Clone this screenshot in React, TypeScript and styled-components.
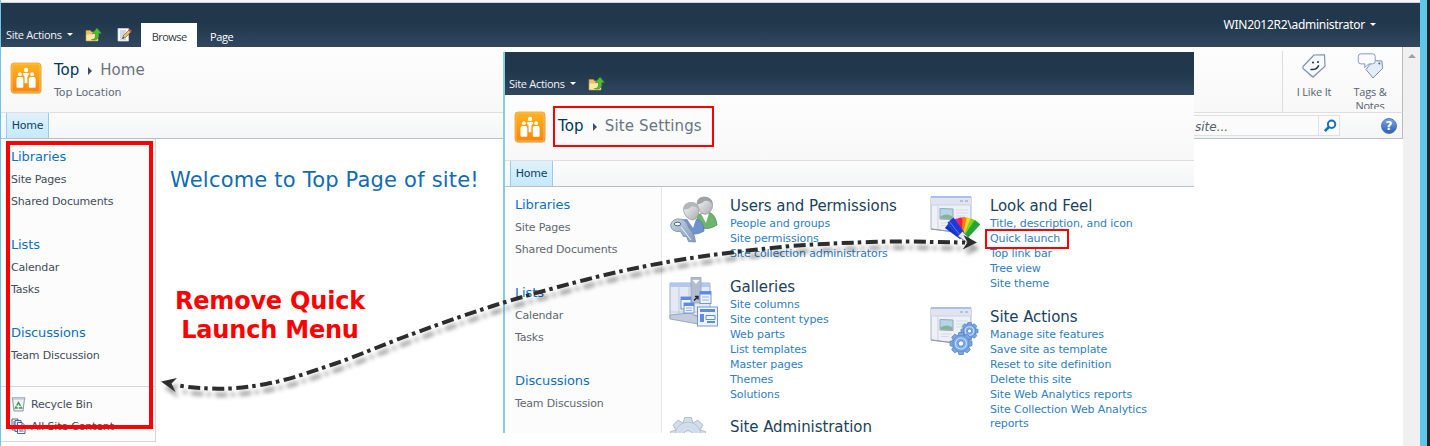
import React from "react";
import styled, { createGlobalStyle } from "styled-components";

const GlobalStyle = createGlobalStyle`
  * { box-sizing: border-box; }
  body {
    margin: 0;
    background: #fff;
    font-family: Verdana, "DejaVu Sans", sans-serif;
    font-size: 11px;
    overflow: hidden;
  }
`;

const uiFont = `"Open Sans", "Noto Sans", sans-serif`;

const Page = styled.div`
  position: relative;
  display: flex;
  width: 1430px;
  height: 446px;
  overflow: hidden;
  background: #fff;
`;

const Desktop = styled.div`
  width: 10px;
  flex: none;
  background: #5ec8ea;
  border-right: 3px solid #24262a;
`;

const Window = styled.div`
  flex: 1;
  display: flex;
  flex-direction: column;
  min-width: 0;
  border-left: 1px solid #6fc6e6;
`;

const WindowEdge = styled.div`
  height: 3px;
  flex: none;
  background: #f6f6f6;
  border-bottom: 1px solid #cfd3d8;
`;

const Ribbon = styled.div<{ $h: number }>`
  display: flex;
  align-items: flex-end;
  flex: none;
  height: ${(p) => p.$h}px;
  background: linear-gradient(#21374c 0%, #21374c 45%, #31475e 100%);
  color: #fff;
  font-family: ${uiFont};
`;

const SiteActions = styled.div<{ $bottom: number; $left?: number }>`
  display: flex;
  align-items: center;
  height: 18px;
  margin: 0 12px ${(p) => p.$bottom}px ${(p) => p.$left ?? 5}px;
  gap: 5px;
  font-size: 11px;
  letter-spacing: -0.3px;
  white-space: nowrap;
  color: #f1f3f5;
`;

const Caret = styled.i`
  border: 3px solid transparent;
  border-top-color: #fff;
  border-bottom: 0;
`;

const RibbonIcon = styled.span<{ $bottom: number; $right?: number }>`
  display: flex;
  margin: 0 ${(p) => p.$right ?? 0}px ${(p) => p.$bottom}px 0;
`;

const RibbonTab = styled.div<{ $active?: boolean }>`
  height: 24px;
  padding: ${(p) => (p.$active ? "0 10.500px 0 11px" : "0 13px")};
  line-height: 28px;
  font-size: 11px;
  letter-spacing: ${(p) => (p.$active ? -0.55 : -0.4)}px;
  background: ${(p) => (p.$active ? "#fff" : "transparent")};
  color: ${(p) => (p.$active ? "#33393f" : "#fff")};
`;

const Account = styled.div`
  display: flex;
  align-items: center;
  gap: 5px;
  height: 20px;
  margin: 0 44px 13px auto;
  font-family: "Noto Sans", sans-serif;
  font-size: 12px;
  letter-spacing: -0.27px;
`;

const Below = styled.div`
  display: flex;
  flex: 1;
  min-height: 0;
`;

const Site = styled.div`
  flex: 1;
  display: flex;
  flex-direction: column;
  min-width: 0;
`;

const ScrollBar = styled.div`
  width: 17px;
  flex: none;
  display: flex;
  justify-content: center;
  padding-top: 7px;
  background: #f0f0f0;
`;

const ScrollUp = styled.i`
  height: 4px;
  border: 4px solid transparent;
  border-bottom-color: #a0a0a0;
  border-top: 0;
`;

const Header = styled.div<{ $edge?: boolean }>`
  display: flex;
  flex: none;
  height: 66px;
  background: linear-gradient(#fdfdfd, #f8f8f9);
  border-bottom: 1px solid #dedede;
  border-right: ${(p) => (p.$edge ? "1px solid #b8babd" : "0")};
`;

const Logo = styled.div<{ $top: number }>`
  margin: ${(p) => p.$top}px 12px 0 9px;
  height: 32px;
`;

const Titles = styled.div<{ $top: number }>`
  display: flex;
  flex-direction: column;
  padding-top: ${(p) => p.$top}px;
`;

const Crumbs = styled.div<{ $ls?: number }>`
  display: flex;
  align-items: center;
  height: 20px;
  font-size: 15px;
  letter-spacing: ${(p) => p.$ls ?? 0}px;
  color: #003759;
  white-space: nowrap;
`;

const CrumbArrow = styled.i`
  margin: 2px 8px 0 9px;
  border: 4px solid transparent;
  border-left-color: #3b4f65;
  border-right: 0;
`;

const CrumbCurrent = styled.span`
  color: #6a7482;
`;

const SubTitle = styled.div`
  margin-top: 6px;
  line-height: 14px;
  letter-spacing: -0.1px;
  color: #5f6b7a;
`;

const Social = styled.div`
  display: flex;
  margin: 4px 0 0 auto;
  width: 120px;
  height: 61px;
  border-left: 1px solid #dcdcdc;
`;

const SocialItem = styled.div<{ $left: number; $w: number }>`
  display: flex;
  flex-direction: column;
  align-items: center;
  width: ${(p) => p.$w}px;
  height: 58px;
  margin-left: ${(p) => p.$left}px;
  overflow: hidden;
  font-family: ${uiFont};
  font-size: 11px;
  line-height: 14px;
  letter-spacing: -0.2px;
  text-align: center;
  color: #56616e;
  svg { flex: none; margin: 2px 0 6px; }
`;

const TopNav = styled.div<{ $edge?: boolean }>`
  display: flex;
  align-items: stretch;
  flex: none;
  height: 26px;
  background: linear-gradient(#fcfcfc, #f4f5f6);
  border-bottom: 1px solid #bcbfc2;
  border-right: ${(p) => (p.$edge ? "1px solid #b8babd" : "0")};
`;

const NavTab = styled.div`
  width: 43px;
  margin-left: 5px;
  border: 1px solid #91cdf2;
  border-width: 0 1px;
  background: linear-gradient(#dff2fd, #c5e9fc);
  color: #0f3f63;
  line-height: 25px;
  text-align: center;
  letter-spacing: -0.2px;
`;

const SearchBox = styled.div`
  display: flex;
  width: 170px;
  height: 21px;
  margin: 2px 41px 0 auto;
  border: 1px solid #e0e0e0;
  background: #fbfbfb;
`;

const SearchText = styled.span`
  flex: 1;
  padding-left: 24px;
  line-height: 23px;
  font-style: italic;
  font-size: 12px;
  color: #555f6b;
`;

const SearchButton = styled.span`
  display: flex;
  align-items: center;
  justify-content: center;
  width: 21px;
  padding-left: 1px;
  border-left: 1px solid #e0e0e0;
`;

const Help = styled.span`
  display: flex;
  align-items: center;
  margin-right: 5px;
`;

const Body = styled.div`
  display: flex;
  align-items: flex-start;
  flex: 1;
  min-height: 0;
`;

const Side = styled.div<{ $w: number; $h: number; $line: string; $faded?: boolean }>`
  display: flex;
  flex-direction: column;
  flex: none;
  width: ${(p) => p.$w}px;
  height: ${(p) => p.$h}px;
  padding-top: 6px;
  background: #fcfcfc;
  border: 0 solid ${(p) => p.$line};
  border-right-width: 1px;
  border-bottom-width: ${(p) => (p.$faded ? 0 : 1)}px;
  color: ${(p) => (p.$faded ? "#5f6770" : "#424d59")};
  letter-spacing: -0.17px;
`;

const SideGroup = styled.div`
  display: flex;
  flex-direction: column;
  margin: 0 0 21px 10px;
  white-space: nowrap;
`;

const SideHead = styled.div`
  height: 23px;
  line-height: 23px;
  font-size: 13px;
  letter-spacing: -0.12px;
  color: #0d72bc;
`;

const SideItem = styled.div`
  display: flex;
  align-items: center;
  gap: 5px;
  height: 22px;
`;

const SideFooter = styled.div`
  margin-top: -1px;
  border-top: 1px solid #d5d7da;
  padding: 6px 0 0 10px;
`;

const Welcome = styled.h1`
  margin: 29px 0 0 14px;
  font-weight: 400;
  font-size: 21px;
  letter-spacing: 0.2px;
  line-height: 25px;
  color: #0f6cb4;
  white-space: nowrap;
`;

const Inset = styled.section`
  position: absolute;
  left: 503px;
  top: 52px;
  width: 691px;
  height: 381px;
  display: flex;
  flex-direction: column;
  overflow: hidden;
  background: #fff;
  border-left: 2px solid #86cde6;
`;

const Column = styled.div<{ $left: number; $w: number }>`
  display: flex;
  flex-direction: column;
  width: ${(p) => p.$w}px;
  margin-left: ${(p) => p.$left}px;
  padding-top: 9px;
`;

const SettingsGroup = styled.div<{ $n: number }>`
  display: flex;
  height: ${(p) => 35.3 + p.$n * 15.08}px;
  flex: none;
  & > svg { flex: none; margin-top: 0; }
`;

const SettingsText = styled.div<{ $gap: number }>`
  margin-left: ${(p) => p.$gap}px;
  white-space: nowrap;
`;

const SettingsHead = styled.div`
  height: 20px;
  line-height: 20px;
  font-size: 15px;
  letter-spacing: -0.08px;
  color: #1a4260;
`;

const SettingsLink = styled.div`
  height: 15.08px;
  line-height: 15.08px;
  letter-spacing: -0.11px;
  color: #2f80c3;
`;

const WrappedLine = styled.div`
  line-height: 14px;
`;

const Callout = styled.div<{ $x: number; $y: number; $w: number; $h: number; $b: number }>`
  position: absolute;
  left: ${(p) => p.$x}px;
  top: ${(p) => p.$y}px;
  width: ${(p) => p.$w}px;
  height: ${(p) => p.$h}px;
  border: ${(p) => p.$b}px solid #fe0000;
`;

const Note = styled.div`
  position: absolute;
  left: 170px;
  top: 287px;
  width: 200px;
  text-align: center;
  font-size: 24px;
  font-weight: 700;
  line-height: 29px;
  letter-spacing: -0.2px;
  color: #fe0000;
  white-space: nowrap;
`;

const Connector = styled.svg`
  position: absolute;
  left: 0;
  top: 0;
  filter: drop-shadow(3px 6px 2px rgba(0, 0, 0, 0.4));
`;

const FolderUp = () => (
  <svg width="17" height="15" viewBox="0 0 17 15">
    <path d="M1 3.500h4.500l1 1.500H13v9H1z" fill="#e8c468" stroke="#b98d35" strokeWidth=".7" />
    <path d="M1.400 7.500h7l1-1H13V13.600H1.400z" fill="#fbe9a9" />
    <path d="M6.500 12.500c3 .3 4.200-1.500 4-6H7.500L12 1l4.500 5.500h-2.700c.5 5-2.300 7.600-7.300 6z" fill="#4fbe35" stroke="#2b8a1d" strokeWidth=".6" />
  </svg>
);

const EditPage = () => (
  <svg width="15" height="15" viewBox="0 0 15 15">
    <path d="M1 1.500h10.500v12.500H1z" fill="#fff" stroke="#c7cfda" strokeWidth=".8" />
    <path d="M3 4h6M3 6h5.500M3 8h4M3 10h3M3 12h6" stroke="#8b9cb5" strokeWidth=".8" />
    <path d="M5.500 11.500l1-3L12 3l2 2-5.500 5.500z" fill="#f0c05a" stroke="#5d4a33" strokeWidth=".6" />
    <path d="M11.400 3.400l1.200-1.600 2.300 2.100-1.400 1.500z" fill="#c65050" />
    <path d="M5.400 11.600l.6-1.700 1.200 1.200z" fill="#222" />
  </svg>
);

const SiteLogo = ({ id }: { id: string }) => (
  <svg width="32" height="32" viewBox="0 0 32 32">
    <defs>
      <linearGradient id={id} x1="0" y1="0" x2="0" y2="1">
        <stop offset="0" stopColor="#ffb41e" />
        <stop offset=".55" stopColor="#fb9a12" />
        <stop offset="1" stopColor="#f98509" />
      </linearGradient>
    </defs>
    <rect x="1.500" y="2" width="30" height="30" rx="3" fill="#dcdcdc" />
    <rect x="1" y="1" width="30" height="30" rx="3" fill={`url(#${id})`} stroke="#e8a040" strokeWidth=".8" />
    <rect x="2" y="2" width="28" height="28" rx="2" fill="none" stroke="#ffc45a" strokeWidth=".8" />
    <g fill="#fff">
      <circle cx="9.800" cy="12.200" r="1.900" />
      <circle cx="16" cy="8" r="2.200" />
      <circle cx="22.200" cy="12.200" r="1.900" />
      <path d="M6.500 17q0-2 1.800-2h3.200q1.800 0 1.800 2v8q0 .8-.8.800h-5q-1 0-1-1z" />
      <path d="M18.800 17q0-2 1.800-2h3.200q1.800 0 1.800 2v8q0 .8-.8.800h-5q-1 0-1-1z" />
      <path d="M12.900 12.300q0-1.300 1.300-1.300h3.600q1.300 0 1.300 1.300l-1.700 2.500v6.500h-2.800v-6.500z" />
    </g>
  </svg>
);

const LikeIcon = () => (
  <svg width="26" height="26" viewBox="0 0 26 26">
    <path d="M3 15.500L13.500 2.500l10.500.5.5 11L12.500 25 9 24z" fill="#c9ced6" opacity=".6" />
    <path d="M2 13.500L13 2l10.500-.3.500 11.500L12 24 2 15.500z" fill="#f7fafe" stroke="#7b8fad" strokeWidth="1.100" strokeLinejoin="round" />
    <circle cx="12" cy="9.500" r="1" fill="#1d2c44" />
    <circle cx="17" cy="9" r="1" fill="#1d2c44" />
    <path d="M9.500 16.500q6 .8 8.300-4.300" stroke="#1d2c44" strokeWidth="1.500" fill="none" />
  </svg>
);

const TagsIcon = () => (
  <svg width="26" height="26" viewBox="0 0 26 26">
    <path d="M9 16.500l7-9 9 .5.500 7.500-9.500 9.500z" fill="#e3edf8" stroke="#7b8fad" strokeLinejoin="round" />
    <circle cx="22.300" cy="10.500" r="1" fill="#4b5f80" />
    <path d="M4 .8h11.500q2.700 0 2.700 2.700v4.700q0 2.700-2.700 2.700h-3.500L7.500 14.500l.5-3.600H4q-2.700 0-2.700-2.700V3.500Q1.300.8 4 .8z" fill="#f8fbff" stroke="#8a9cb8" />
  </svg>
);

const SearchIcon = () => (
  <svg width="14" height="14" viewBox="0 0 14 14">
    <circle cx="8.600" cy="5.200" r="3.700" fill="#fff" stroke="#1272b8" strokeWidth="2" />
    <path d="M5.900 8L1.800 12.200" stroke="#1272b8" strokeWidth="2.600" />
  </svg>
);

const HelpMark = styled.span`
  display: flex;
  align-items: center;
  justify-content: center;
  width: 16px;
  height: 16px;
  border-radius: 50%;
  border: 1px solid #4a76c4;
  background: linear-gradient(#79a4e3, #2f5fb5);
  color: #fff;
  font-weight: 700;
  font-size: 12px;
`;

const RecycleIcon = () => (
  <svg width="15" height="16" viewBox="0 0 15 16">
    <path d="M1.500 2.500h12l-1.500 12.500h-9z" fill="#eef3f5" stroke="#8795a3" />
    <path d="M1 1.500h13v1.500H1z" fill="#dfe5ea" stroke="#8795a3" strokeWidth=".6" />
    <path d="M7.500 6.500l3 5.500H4.500z" fill="none" stroke="#3f9a4a" strokeWidth="1.500" strokeDasharray="4 1" />
  </svg>
);

const AllContentIcon = () => (
  <svg width="15" height="16" viewBox="0 0 15 16">
    <path d="M1 1h6v11H1z" fill="#fff" stroke="#39568c" strokeWidth=".9" />
    <path d="M4 2.500h6v11H4z" fill="#dbe6f7" stroke="#39568c" strokeWidth=".9" />
    <path d="M6.500 4.500h4.500l3 3v8H6.500z" fill="#f5f8fd" stroke="#39568c" strokeWidth=".9" />
    <path d="M11 4.500v3h3M8 9h4.500M8 11h4.500M8 13h4.500M2 4h2M2 6h2M2 8h2" stroke="#39568c" strokeWidth=".9" fill="none" />
  </svg>
);

const UsersIcon = () => (
  <svg width="50" height="50" viewBox="0 0 50 50">
    <defs>
      <linearGradient id="face" x1="0" y1="0" x2="1" y2="1">
        <stop offset="0" stopColor="#fafafa" />
        <stop offset="1" stopColor="#a8aaad" />
      </linearGradient>
      <linearGradient id="key" x1="0" y1="0" x2="1" y2="1">
        <stop offset="0" stopColor="#c5d5e8" />
        <stop offset="1" stopColor="#8299b8" />
      </linearGradient>
    </defs>
    <path d="M27 19l13-3q7 3 8 13-8 5-15 3z" fill="#6cb56c" stroke="#4f9455" strokeWidth=".8" />
    <path d="M32 18l8-1-3 10z" fill="#fff" />
    <path d="M28 8q0-7 8-7 8 1 7.500 9-1 7-7 8.500-7-1-8.500-10.500z" fill="url(#face)" stroke="#9b9ea1" strokeWidth=".8" />
    <path d="M28 8q0-8 9-7 7 1 6.500 8-3-5-8-4-4 4-7.500 3z" fill="#a0a3a6" />
    <path d="M13 24l14-1q8 2 8 12-8 5-17 2z" fill="#6f92cf" stroke="#5475b0" strokeWidth=".8" />
    <path d="M18 23l9 0-3 9z" fill="#fff" />
    <path d="M14.500 14q0-7 8-7.500 8 1 7.500 9-1 7-6 8.500-8-1-9.500-10z" fill="url(#face)" stroke="#9b9ea1" strokeWidth=".8" />
    <path d="M14.500 13q0-7 8.500-7 7 1 7 7.500-4-4-7.500-3-4 4-8 2.500z" fill="#b4b6b9" />
    <path d="M1.500 29q2-7 10-6 6 1 8 8l6 9 1 6-7-.5-2-5-3 0-3-5q-9 1-10-6.500z" fill="url(#key)" stroke="#748aa8" strokeWidth=".8" />
    <ellipse cx="8.500" cy="28" rx="3.200" ry="1.800" fill="#fff" stroke="#50657f" />
    <path d="M12 31l10 13" stroke="#eef4fb" />
  </svg>
);

const WindowShape = () => (
  <g>
    <path d="M1 1h40v37L1 33z" fill="#edf0f5" stroke="#a9b5ca" />
    <path d="M1 1h40v8H1z" fill="#dfe4f0" />
    <path d="M1 1h40" stroke="#9db4f0" strokeWidth="1.600" />
    <path d="M30 5h3M35 5h3" stroke="#a9b5c9" strokeWidth="1.500" />
    <path d="M8 9v24M1 9h40" stroke="#ccd3e0" fill="none" />
    <path d="M10 12.500l13 .5v10.500l-13-.5z" fill="#b4d7e8" stroke="#90a8c0" />
    <path d="M10.500 20.500q6-4 12 0v2.500l-12-.5z" fill="#8bb094" />
    <path d="M26 14h12M26 17h12M26 20h9M11 27h10M11 29.500h8" stroke="#d5dbe6" />
    <path d="M1 33l40 5" stroke="#8a95aa" strokeWidth="1.200" />
  </g>
);

const GalleriesIcon = () => (
  <svg width="50" height="50" viewBox="0 0 50 50">
    <path d="M1 6h40v31L1 41z" fill="#e4e9f3" stroke="#9fadca" />
    <path d="M1 6h40v4H1z" fill="#b3c6f0" />
    <path d="M10 10v30M20 10v28M1 35l28 0" stroke="#c2cbdd" />
    <path d="M1 38l20-2 8 4v7L1 42z" fill="#c3ccdb" stroke="#8c99b3" strokeWidth=".8" />
    <path d="M22 0h10v26H22z" fill="#b2bdd0" stroke="#97a4bb" strokeWidth=".8" />
    <path d="M23.500 3h7l-3.500 4z" fill="#fff" />
    <g fill="#eef4ff" stroke="#6b8cd0" strokeWidth=".9">
      <rect x="12" y="20" width="10" height="12" />
      <rect x="15" y="26" width="10" height="10" />
      <rect x="31" y="14.500" width="11" height="12" />
      <rect x="28.500" y="30" width="20" height="19" />
    </g>
    <g fill="#5d8be4">
      <path d="M12 20h10v3H12zM15 26h10v3H15zM31 14.500h11v3H31zM31 32h15v3H31zM31 37h4v8h-4zM38 44h8v2h-8z" />
    </g>
    <path d="M37 38.500h9v4h-9z" fill="none" stroke="#5d8be4" />
    <path d="M33 20h7M33 23h7M17 31h6M17 33.500h6" stroke="#9ab0d8" />
    <path d="M25 23.500l3-3M26 19.500h3v3" stroke="#222" strokeWidth="1.400" fill="none" />
  </svg>
);

const fan = ["#1430c8", "#2a49ea", "#7824d0", "#e01fb8", "#ee2040", "#f97c14", "#f4d61c", "#7fd321", "#24a636"];

const LookIcon = () => (
  <svg width="50" height="50" viewBox="0 0 50 50">
    <WindowShape />
    {fan.map((c, i) => (
      <path key={c} d="M-2.200-3L-3.500-22h7L2.200-3z" fill={c} transform={`translate(34 43.500) rotate(${-50 + i * 11})`} />
    ))}
    <path d="M17.500 26.500l6-5 11 15-5 5z" fill="#1c3bd0" />
    <path d="M19 25l11 14" stroke="#5b7bff" strokeWidth="1" />
    <path d="M28 40l4.500-4.500 9 9-3.500 3z" fill="#e6e9ee" stroke="#66707f" strokeWidth=".8" />
  </svg>
);

const Gear = ({ x, y, r, c = "#7ba8e2", s = "#5583c4" }: { x: number; y: number; r: number; c?: string; s?: string }) => (
  <g transform={`translate(${x} ${y})`}>
    {[0, 45, 90, 135, 180, 225, 270, 315].map((a) => (
      <path key={a} transform={`rotate(${a})`} d={`M${-r * 0.2} ${-r}h${r * 0.4}l${r * 0.1} ${r * 0.4}h${-r * 0.6}z`} fill={c} stroke={s} strokeWidth=".8" />
    ))}
    <circle r={r * 0.74} fill={c} stroke={s} strokeWidth=".6" />
    <circle r={r * 0.5} fill="none" stroke="#c3dbf8" strokeWidth="1.200" />
    <circle r={r * 0.25} fill="#eef5fd" stroke={s} strokeWidth=".8" />
  </g>
);

const ActionsIcon = () => (
  <svg width="50" height="50" viewBox="0 0 50 50">
    <WindowShape />
    <Gear x={39.500} y={24} r={8.500} />
    <Gear x={31} y={36.500} r={11} />
  </svg>
);

const AdminIcon = () => (
  <svg width="50" height="50" viewBox="0 0 50 50">
    <Gear x={19} y={18} r={17.500} c="#d3deea" s="#a3b2c5" />
  </svg>
);

const navGroups = [
  { head: "Libraries", items: ["Site Pages", "Shared Documents"] },
  { head: "Lists", items: ["Calendar", "Tasks"] },
  { head: "Discussions", items: ["Team Discussion"] },
];

const SideNav = () => (
  <>
    {navGroups.map((g) => (
      <SideGroup key={g.head}>
        <SideHead>{g.head}</SideHead>
        {g.items.map((t) => (
          <SideItem key={t}>{t}</SideItem>
        ))}
      </SideGroup>
    ))}
  </>
);

type Group = { head: string; icon: React.ReactNode; links: string[]; wrapped?: string };

const leftGroups: Group[] = [
  { head: "Users and Permissions", icon: <UsersIcon />, links: ["People and groups", "Site permissions", "Site collection administrators"] },
  {
    head: "Galleries",
    icon: <GalleriesIcon />,
    links: ["Site columns", "Site content types", "Web parts", "List templates", "Master pages", "Themes", "Solutions"],
  },
  { head: "Site Administration", icon: <AdminIcon />, links: [] },
];

const rightGroups: Group[] = [
  { head: "Look and Feel", icon: <LookIcon />, links: ["Title, description, and icon", "Quick launch", "Top link bar", "Tree view", "Site theme"] },
  {
    head: "Site Actions",
    icon: <ActionsIcon />,
    links: [
      "Manage site features",
      "Save site as template",
      "Reset to site definition",
      "Delete this site",
      "Site Web Analytics reports",
      "Site Collection Web Analytics",
    ],
    wrapped: "reports",
  },
];

const SettingsColumn = ({ groups, left, width, gap }: { groups: Group[]; left: number; width: number; gap: number }) => (
  <Column $left={left} $w={width}>
    {groups.map((g) => (
      <SettingsGroup key={g.head} $n={g.links.length}>
        {g.icon}
        <SettingsText $gap={gap}>
          <SettingsHead>{g.head}</SettingsHead>
          {g.links.map((l) => (
            <SettingsLink key={l}>{l}</SettingsLink>
          ))}
          {g.wrapped && <SettingsLink as={WrappedLine} style={undefined}>{g.wrapped}</SettingsLink>}
        </SettingsText>
      </SettingsGroup>
    ))}
  </Column>
);

export default function App() {
  return (
    <Page>
      <GlobalStyle />
      <Window>
        <WindowEdge />
        <Ribbon $h={44}>
          <SiteActions $bottom={4}>
            Site Actions <Caret />
          </SiteActions>
          <RibbonIcon $bottom={5} $right={15}>
            <FolderUp />
          </RibbonIcon>
          <RibbonIcon $bottom={5} $right={9}>
            <EditPage />
          </RibbonIcon>
          <RibbonTab $active>Browse</RibbonTab>
          <RibbonTab>Page</RibbonTab>
          <Account>
            WIN2012R2\administrator <Caret />
          </Account>
        </Ribbon>
        <Below>
          <Site>
            <Header $edge>
              <Logo $top={15}>
                <SiteLogo id="logo-main" />
              </Logo>
              <Titles $top={13}>
                <Crumbs>
                  Top <CrumbArrow />
                  <CrumbCurrent>Home</CrumbCurrent>
                </Crumbs>
                <SubTitle>Top Location</SubTitle>
              </Titles>
              <Social>
                <SocialItem $left={12} $w={38}>
                  <LikeIcon />I Like It
                </SocialItem>
                <SocialItem $left={18} $w={38}>
                  <TagsIcon />
                  Tags &amp; Notes
                </SocialItem>
              </Social>
            </Header>
            <TopNav $edge>
              <NavTab>Home</NavTab>
              <SearchBox>
                <SearchText>site...</SearchText>
                <SearchButton>
                  <SearchIcon />
                </SearchButton>
              </SearchBox>
              <Help>
                <HelpMark>?</HelpMark>
              </Help>
            </TopNav>
            <Body>
              <Side $w={155} $h={303} $line="#d5d7da">
                <SideNav />
                <SideFooter>
                  <SideItem>
                    <RecycleIcon />
                    Recycle Bin
                  </SideItem>
                  <SideItem>
                    <AllContentIcon />
                    All Site Content
                  </SideItem>
                </SideFooter>
              </Side>
              <Welcome>Welcome to Top Page of site!</Welcome>
            </Body>
          </Site>
          <ScrollBar>
            <ScrollUp />
          </ScrollBar>
        </Below>
      </Window>
      <Desktop />

      <Inset>
        <Ribbon $h={43}>
          <SiteActions $bottom={3} $left={4}>
            Site Actions <Caret />
          </SiteActions>
          <RibbonIcon $bottom={4}>
            <FolderUp />
          </RibbonIcon>
        </Ribbon>
        <Header>
          <Logo $top={16}>
            <SiteLogo id="logo-inset" />
          </Logo>
          <Titles $top={21}>
            <Crumbs $ls={0.15}>
              Top <CrumbArrow />
              <CrumbCurrent>Site Settings</CrumbCurrent>
            </Crumbs>
          </Titles>
        </Header>
        <TopNav>
          <NavTab>Home</NavTab>
        </TopNav>
        <Body>
          <Side $w={157} $h={246} $line="#e6e7e9" $faded>
            <SideNav />
          </Side>
          <SettingsColumn groups={leftGroups} left={7} width={261} gap={11} />
          <SettingsColumn groups={rightGroups} left={0} width={250} gap={10} />
        </Body>
      </Inset>

      <Callout $x={6} $y={141} $w={147} $h={288} $b={4} />
      <Callout $x={553} $y={106} $w={161} $h={41} $b={2} />
      <Callout $x={985} $y={229} $w={84} $h={20} $b={2} />
      <Note>
        Remove Quick
        <br />
        Launch Menu
      </Note>
      <Connector width="1430" height="446" viewBox="0 0 1430 446">
        <path
          d="M180.300 385.800C193 388 205.400 388.500 218 388.700C234 389 250 386.900 266 384C288.700 379.900 311.300 371.700 334 364C356.900 356.200 379.800 346 402.700 337.500C432.700 326.400 462.700 315.600 492.700 306C523.700 296.100 554.700 287.800 585.700 279.700C616.800 271.600 647.900 265.300 679 260C710.700 254.600 742.300 251.200 774 247.700C806 244.200 838 243.300 870 242C901.700 240.700 933.300 242.200 965 242.500"
          fill="none"
          stroke="#2d2d2d"
          strokeWidth="4"
          pathLength={803}
          strokeDasharray="3.5 4.5 12 4"
        />
        <path d="M161 381.500L177 378 171.500 383.500 175.500 392z" fill="#2d2d2d" />
        <path d="M977 242.500L963.500 235 967.500 242.300 962.700 249.500z" fill="#2d2d2d" />
      </Connector>
    </Page>
  );
}
